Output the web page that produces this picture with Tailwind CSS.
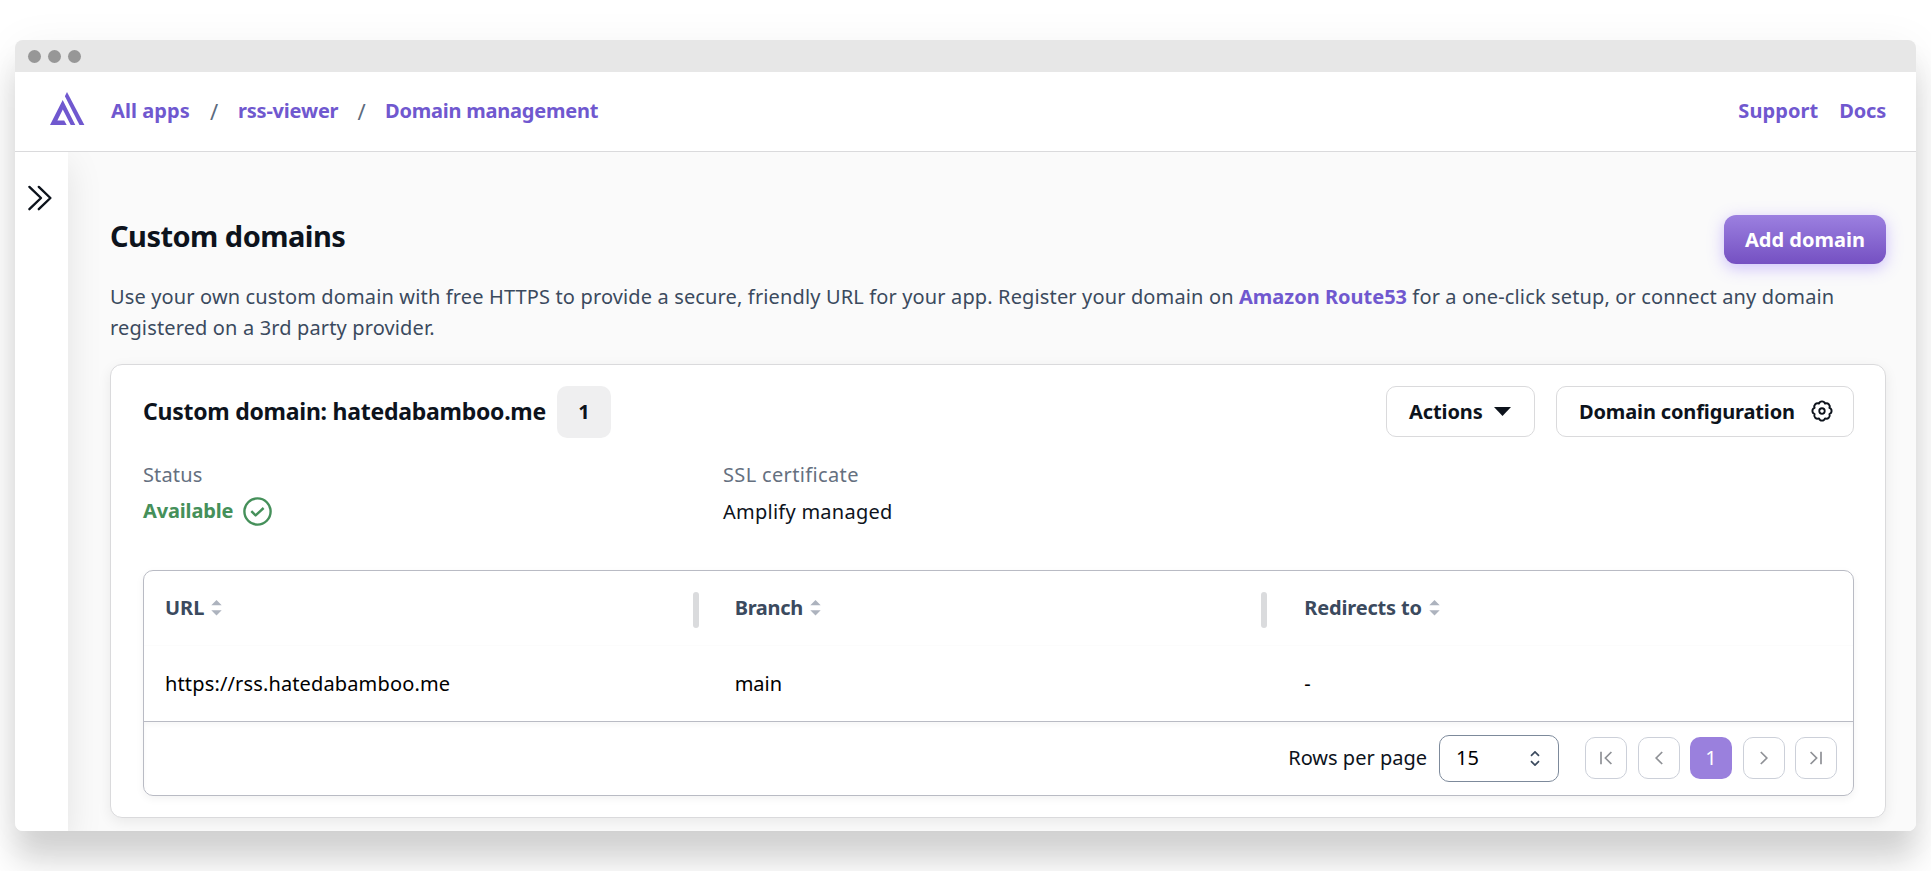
<!DOCTYPE html>
<html lang="en">
<head>
<meta charset="utf-8">
<title>Domain management</title>
<script src="https://cdn.jsdelivr.net/npm/@tailwindcss/browser@4"></script>
</head>
<body class="bg-white w-[1931px] h-[871px] overflow-hidden pt-10 pl-[15px] font-['Noto_Sans',sans-serif] text-xl leading-[30px] text-[#0d131c]">
<div class="w-[1901px] h-[791px] rounded-[8px] shadow-[0_30px_32px_rgba(0,0,0,0.16),0_4px_44px_rgba(0,0,0,0.05)]">
<div class="size-full flex flex-col rounded-[8px] overflow-hidden bg-[#fafafa]">
  <!-- Window bar -->
  <div class="h-8 shrink-0 bg-[#e7e7e7] flex items-center gap-[7px] pl-[13px] pt-px">
    <span class="size-[13px] rounded-full bg-[#979797]"></span>
    <span class="size-[13px] rounded-full bg-[#979797]"></span>
    <span class="size-[13px] rounded-full bg-[#979797]"></span>
  </div>

  <!-- Top navigation -->
  <header class="relative z-20 h-20 shrink-0 bg-white border-b border-[#dadadc] flex items-center justify-between pl-[35px] pr-[30px] pb-px font-bold text-[#7058cf]">
    <div class="flex items-center">
      <svg class="w-[35px] h-[33px] mr-[26px] -mt-[5px]" viewBox="0 0 35 33" fill="#7058cf">
        <path d="M0 32.9 12.7 8 25.3 32.9H20.7L12.8 17.4 7.4 28.5H14.2L16.7 32.9Z"/>
        <path d="M17 0 34.4 32.9H29.5L14.9 4.2Z"/>
      </svg>
      <nav class="flex items-center">
        <a class="w-[79px] tracking-[0.08px] whitespace-nowrap">All apps</a>
        <span class="w-[48px] text-center text-[22px] font-normal text-[#5c6b7e]">/</span>
        <a class="w-[100px] tracking-[-0.2px] whitespace-nowrap">rss-viewer</a>
        <span class="w-[47px] text-center text-[22px] font-normal text-[#5c6b7e]">/</span>
        <a class="tracking-[-0.22px] whitespace-nowrap">Domain management</a>
      </nav>
    </div>
    <div class="flex gap-[21px]">
      <a class="tracking-[0.08px]">Support</a>
      <a class="tracking-[-0.2px]">Docs</a>
    </div>
  </header>

  <div class="flex flex-1 min-h-0">
    <!-- Collapsed sidebar -->
    <aside class="relative z-10 w-[53px] shrink-0 bg-white pt-[33px] pl-[12px] shadow-[0_12px_36px_rgba(0,0,0,0.1)]">
      <svg class="w-[27px] h-[27px]" viewBox="0 0 27 27" fill="none" stroke="#0d131c" stroke-width="2.4" stroke-linecap="round" stroke-linejoin="round">
        <path d="M2.4 1.9 14 13 2.4 24.2M11.8 1.9 23.4 13 11.8 24.2"/>
      </svg>
    </aside>

    <main class="flex-1 min-w-0 pt-[63px] pl-[42px] pr-[30px]">
      <div class="flex items-start justify-between">
        <h1 class="mt-[3px] text-[29px] leading-9 font-bold tracking-[-0.53px]">Custom domains</h1>
        <button class="w-[162px] h-[49px] rounded-[12px] bg-linear-to-b from-[#9c80e0] to-[#7550c2] text-white font-bold shadow-[0_4px_16px_rgba(117,80,255,0.34)]">Add domain</button>
      </div>
      <p class="mt-[17px] h-[62px] leading-[31px] tracking-[0.14px] whitespace-nowrap text-[#3b4a5e]">Use your own custom domain with free HTTPS to provide a secure, friendly URL for your app. Register your domain on <a class="font-bold tracking-normal text-[#7058cf]">Amazon Route53</a> for a one-click setup, or connect any domain<br>registered on a 3rd party provider.</p>

      <section class="mt-[21px] h-[454px] rounded-[12px] border border-[#dadadc] bg-white pl-8 pr-[31px] pt-[21px] shadow-[0_4px_14px_rgba(0,0,0,0.07)]">
        <div class="flex items-start justify-between h-[52px]">
          <div class="flex items-center gap-[11px] h-[52px]">
            <h2 class="text-[23px] font-bold leading-[30px] tracking-[-0.26px] pb-[2px]">Custom domain: hatedabamboo.me</h2>
            <span class="w-[54px] h-[52px] rounded-[10px] bg-[#efeff0] font-bold flex items-center justify-center">1</span>
          </div>
          <div class="flex gap-[21px]">
            <button class="w-[149px] h-[51px] rounded-[10px] border border-[#dadadc] font-bold flex items-center pl-[22px]"><span class="tracking-[-0.1px]">Actions</span>
              <svg class="ml-[11px] w-[17px] h-[9px]" viewBox="0 0 17 9" fill="#0d131c"><path d="M0 0H17L8.5 9Z"/></svg>
            </button>
            <button class="w-[298px] h-[51px] rounded-[10px] border border-[#dadadc] font-bold flex items-center pl-[22px]"><span class="tracking-[-0.14px]">Domain configuration</span>
              <svg class="ml-[16px] -mt-px w-[22px] h-[22px]" viewBox="-11 -11 22 22" fill="none" stroke="#0d131c" stroke-width="1.9" stroke-linejoin="round">
                <path d="M7.4-3.07A3.25 3.25 0 0 1 7.4 3.07A3.25 3.25 0 0 1 3.07 7.4A3.25 3.25 0 0 1-3.07 7.4A3.25 3.25 0 0 1-7.4 3.07A3.25 3.25 0 0 1-7.4-3.07A3.25 3.25 0 0 1-3.07-7.4A3.25 3.25 0 0 1 3.07-7.4A3.25 3.25 0 0 1 7.4-3.07Z"/>
                <circle r="2.7"/>
              </svg>
            </button>
          </div>
        </div>

        <div class="mt-[22px] grid grid-cols-[580px_1fr]">
          <div>
            <div class="text-[#65707f] tracking-[0.14px]">Status</div>
            <div class="mt-[7px] h-[30px] flex items-center gap-[10px] -translate-y-px font-bold text-[#45905a]"><span class="tracking-[-0.15px]">Available</span>
              <svg class="size-[29px]" viewBox="0 0 29 29" fill="none" stroke="#45905a" stroke-width="2.4">
                <circle cx="14.5" cy="14.5" r="13.1"/>
                <path d="M8.3 14.2 12.6 18.4 20.6 11" stroke-linejoin="round"/>
              </svg>
            </div>
          </div>
          <div>
            <div class="text-[#65707f] tracking-[0.35px]">SSL certificate</div>
            <div class="mt-[7px] tracking-[0.25px]">Amplify managed</div>
          </div>
        </div>

        <!-- Domain table -->
        <div class="mt-[43px] h-[226px] rounded-[10px] border border-[#b9bbc4] overflow-hidden shadow-[0_3px_8px_rgba(0,0,0,0.05)]">
          <div class="grid grid-cols-3 h-[75px] border-b border-[#fcfcfc] font-bold text-[#3b4a5e]">
            <div class="flex items-center pl-[21px] pr-[15px]">URL
              <svg class="ml-[7px] -mt-px w-[11px] h-[16px]" viewBox="0 0 11 16" fill="#adb3be"><path d="M5.5 0 10.7 5.3H.3ZM5.5 15.5 10.7 10.2H.3Z"/></svg>
              <span class="ml-auto mt-[4px] w-[6px] h-9 rounded-full bg-[#dadbdd]"></span>
            </div>
            <div class="flex items-center pl-[21px] pr-[16px]"><span class="tracking-[-0.33px]">Branch</span>
              <svg class="ml-[7px] -mt-px w-[11px] h-[16px]" viewBox="0 0 11 16" fill="#adb3be"><path d="M5.5 0 10.7 5.3H.3ZM5.5 15.5 10.7 10.2H.3Z"/></svg>
              <span class="ml-auto mt-[4px] w-[6px] h-9 rounded-full bg-[#dadbdd]"></span>
            </div>
            <div class="flex items-center pl-[21px]"><span class="tracking-[-0.18px]">Redirects to</span>
              <svg class="ml-[7px] -mt-px w-[11px] h-[16px]" viewBox="0 0 11 16" fill="#adb3be"><path d="M5.5 0 10.7 5.3H.3ZM5.5 15.5 10.7 10.2H.3Z"/></svg>
            </div>
          </div>
          <div class="grid grid-cols-3 h-[76px] items-center border-b border-[#b9bbc4] text-black">
            <div class="pl-[21px] tracking-[0.14px]">https://rss.hatedabamboo.me</div>
            <div class="pl-[21px]">main</div>
            <div class="pl-[21px]">-</div>
          </div>
          <div class="h-[73px] flex items-center justify-end pr-4 pb-px shadow-[inset_0_3px_4px_rgba(0,0,0,0.03)]">
            <span>Rows per page</span>
            <div class="ml-[12px] mr-[26px] w-[120px] h-[47px] rounded-[10px] border border-[#7d8a9b] bg-white flex items-center justify-between pl-[16px] pr-[18px] text-black">15
              <svg class="w-[10px] h-[15px]" viewBox="0 0 10 15" fill="none" stroke="#3b4a5e" stroke-width="1.7"><path d="M1 4.8 5 .9 9 4.8M1 10.2 5 14.1 9 10.2"/></svg>
            </div>
            <div class="flex gap-[10.5px]">
              <button class="size-[42px] rounded-[10px] border border-[#ccd0d9] flex items-center justify-center">
                <svg class="w-[12px] h-[14px]" viewBox="0 0 12 14" fill="none" stroke="#8f9196" stroke-width="1.7"><path d="M1 .7V13.3M11.4 1 5.4 7 11.4 13"/></svg>
              </button>
              <button class="size-[42px] rounded-[10px] border border-[#ccd0d9] flex items-center justify-center">
                <svg class="w-[8px] h-[14px]" viewBox="0 0 8 14" fill="none" stroke="#8f9196" stroke-width="1.7"><path d="M7.2 1 1.2 7 7.2 13"/></svg>
              </button>
              <button class="size-[42px] rounded-[10px] bg-[#9a80dd] text-white">1</button>
              <button class="size-[42px] rounded-[10px] border border-[#ccd0d9] flex items-center justify-center">
                <svg class="w-[8px] h-[14px]" viewBox="0 0 8 14" fill="none" stroke="#8f9196" stroke-width="1.7"><path d="M.8 1 6.8 7 .8 13"/></svg>
              </button>
              <button class="size-[42px] rounded-[10px] border border-[#ccd0d9] flex items-center justify-center">
                <svg class="w-[12px] h-[14px]" viewBox="0 0 12 14" fill="none" stroke="#8f9196" stroke-width="1.7"><path d="M11 .7V13.3M.6 1 6.6 7 .6 13"/></svg>
              </button>
            </div>
          </div>
        </div>
      </section>
    </main>
  </div>
</div>
</div>
</body>
</html>
